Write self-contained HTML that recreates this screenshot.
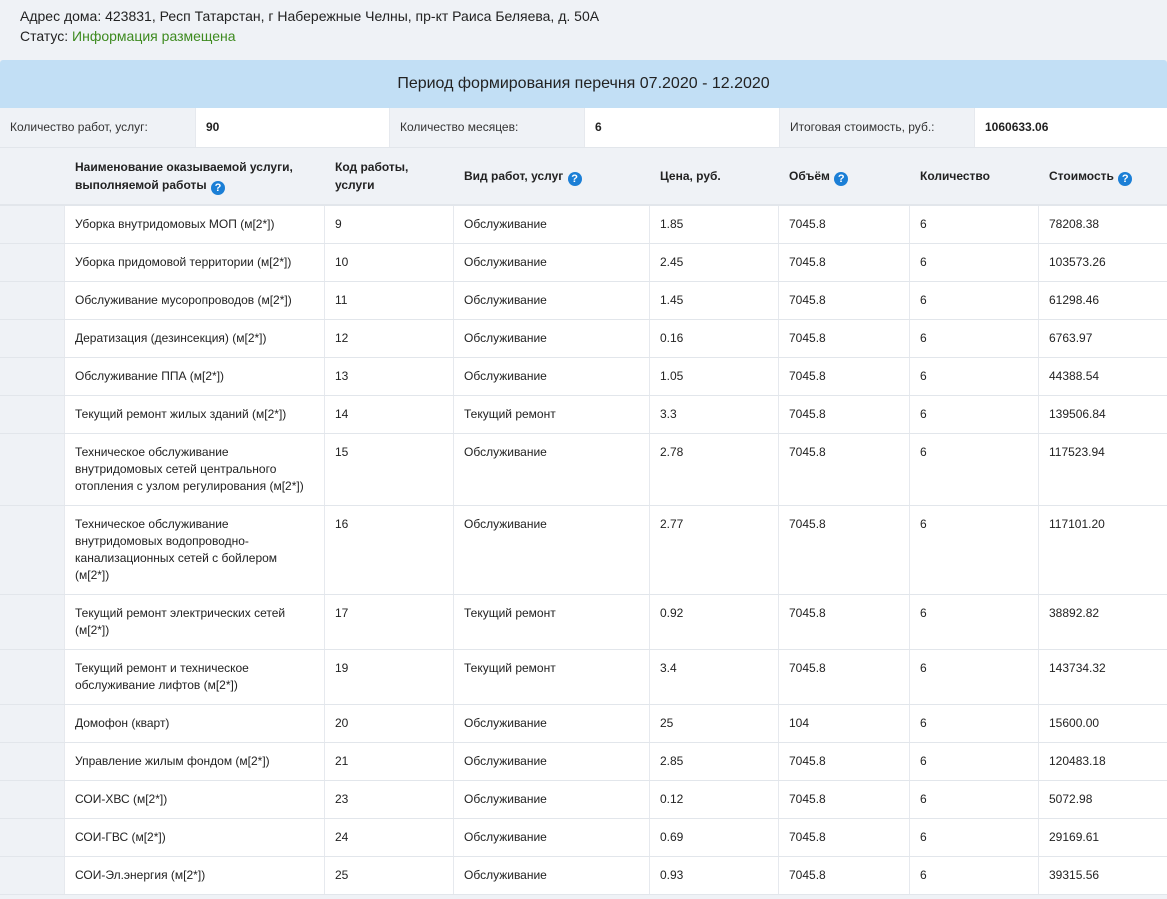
<!DOCTYPE html>
<html><head><meta charset="utf-8"><style>
*{box-sizing:border-box;margin:0;padding:0}
body{width:1167px;height:899px;overflow:hidden;background:#eff2f6;font-family:"Liberation Sans",Arial,sans-serif;color:#222}
.top{padding:6px 0 0 20px;font-size:14px;line-height:20px;color:#222}
.top .g{color:#3d8a1f}
.band{position:absolute;top:60px;left:0;width:1167px;height:48px;background:#c2dff5;text-align:center;font-size:16px;line-height:48px;color:#222;border-radius:3px 3px 0 0}
.info{position:absolute;top:108px;left:0;width:1167px;height:40px;display:flex;border-bottom:1px solid #e2e6eb}
.info div{height:39px;line-height:39px;font-size:12px;padding-left:10px;border-right:1px solid #e6e9ee}
.info .l{background:#eff2f6;color:#333}
.info .v{background:#fff;font-weight:bold;padding-left:10px}
.tbl{position:absolute;top:148px;left:0;width:1167px}
.r{display:flex;border-bottom:1px solid #e2e6eb;background:#fff}
.r>div{border-right:1px solid #e6e9ee;padding:10px 0 0 10px;font-size:12px;line-height:17px;color:#222}
.r>div:last-child{border-right:none}
.r>div:first-child{background:#eff2f6;padding:0}
.h{background:#eff2f6;border-bottom:2px solid #e2e6eb}
.h>div{border-right:none!important;font-weight:bold;display:flex;align-items:center;padding-top:0!important;line-height:18px}
.c0{width:65px}.c1{width:260px}.c2{width:129px}.c3{width:196px}.c4{width:129px}.c5{width:131px}.c6{width:129px}.c7{width:128px}
.q{display:inline-block;width:14px;height:14px;border-radius:50%;background:#1b7fd6;color:#fff;font-size:11px;line-height:14px;text-align:center;font-weight:bold;vertical-align:-2px;margin-left:1px}
</style></head><body>
<div class="top">Адрес дома: 423831, Респ Татарстан, г Набережные Челны, пр-кт Раиса Беляева, д. 50А<br>Статус: <span class="g">Информация размещена</span></div>
<div class="band">Период формирования перечня 07.2020 - 12.2020</div>
<div class="info">
<div class="l" style="width:196px">Количество работ, услуг:</div>
<div class="v" style="width:194px">90</div>
<div class="l" style="width:195px">Количество месяцев:</div>
<div class="v" style="width:195px">6</div>
<div class="l" style="width:195px">Итоговая стоимость, руб.:</div>
<div class="v" style="width:192px;border-right:none">1060633.06</div>
</div>
<div class="tbl">
<div class="r h" style="height:58px">
<div class="c0"></div>
<div class="c1" style="padding-left:10px"><span>Наименование оказываемой услуги,<br>выполняемой работы <span class="q">?</span></span></div>
<div class="c2"><span>Код работы,<br>услуги</span></div>
<div class="c3"><span>Вид работ, услуг <span class="q">?</span></span></div>
<div class="c4"><span>Цена, руб.</span></div>
<div class="c5"><span>Объём <span class="q">?</span></span></div>
<div class="c6"><span>Количество</span></div>
<div class="c7"><span>Стоимость <span class="q">?</span></span></div>
</div>
<div class="r" style="height:38px"><div class="c0"></div><div class="c1">Уборка внутридомовых МОП (м[2*])</div><div class="c2">9</div><div class="c3">Обслуживание</div><div class="c4">1.85</div><div class="c5">7045.8</div><div class="c6">6</div><div class="c7">78208.38</div></div>
<div class="r" style="height:38px"><div class="c0"></div><div class="c1">Уборка придомовой территории (м[2*])</div><div class="c2">10</div><div class="c3">Обслуживание</div><div class="c4">2.45</div><div class="c5">7045.8</div><div class="c6">6</div><div class="c7">103573.26</div></div>
<div class="r" style="height:38px"><div class="c0"></div><div class="c1">Обслуживание мусоропроводов (м[2*])</div><div class="c2">11</div><div class="c3">Обслуживание</div><div class="c4">1.45</div><div class="c5">7045.8</div><div class="c6">6</div><div class="c7">61298.46</div></div>
<div class="r" style="height:38px"><div class="c0"></div><div class="c1">Дератизация (дезинсекция) (м[2*])</div><div class="c2">12</div><div class="c3">Обслуживание</div><div class="c4">0.16</div><div class="c5">7045.8</div><div class="c6">6</div><div class="c7">6763.97</div></div>
<div class="r" style="height:38px"><div class="c0"></div><div class="c1">Обслуживание ППА (м[2*])</div><div class="c2">13</div><div class="c3">Обслуживание</div><div class="c4">1.05</div><div class="c5">7045.8</div><div class="c6">6</div><div class="c7">44388.54</div></div>
<div class="r" style="height:38px"><div class="c0"></div><div class="c1">Текущий ремонт жилых зданий (м[2*])</div><div class="c2">14</div><div class="c3">Текущий ремонт</div><div class="c4">3.3</div><div class="c5">7045.8</div><div class="c6">6</div><div class="c7">139506.84</div></div>
<div class="r" style="height:72px"><div class="c0"></div><div class="c1">Техническое обслуживание<br>внутридомовых сетей центрального<br>отопления с узлом регулирования (м[2*])</div><div class="c2">15</div><div class="c3">Обслуживание</div><div class="c4">2.78</div><div class="c5">7045.8</div><div class="c6">6</div><div class="c7">117523.94</div></div>
<div class="r" style="height:89px"><div class="c0"></div><div class="c1">Техническое обслуживание<br>внутридомовых водопроводно-<br>канализационных сетей с бойлером<br>(м[2*])</div><div class="c2">16</div><div class="c3">Обслуживание</div><div class="c4">2.77</div><div class="c5">7045.8</div><div class="c6">6</div><div class="c7">117101.20</div></div>
<div class="r" style="height:55px"><div class="c0"></div><div class="c1">Текущий ремонт электрических сетей<br>(м[2*])</div><div class="c2">17</div><div class="c3">Текущий ремонт</div><div class="c4">0.92</div><div class="c5">7045.8</div><div class="c6">6</div><div class="c7">38892.82</div></div>
<div class="r" style="height:55px"><div class="c0"></div><div class="c1">Текущий ремонт и техническое<br>обслуживание лифтов (м[2*])</div><div class="c2">19</div><div class="c3">Текущий ремонт</div><div class="c4">3.4</div><div class="c5">7045.8</div><div class="c6">6</div><div class="c7">143734.32</div></div>
<div class="r" style="height:38px"><div class="c0"></div><div class="c1">Домофон (кварт)</div><div class="c2">20</div><div class="c3">Обслуживание</div><div class="c4">25</div><div class="c5">104</div><div class="c6">6</div><div class="c7">15600.00</div></div>
<div class="r" style="height:38px"><div class="c0"></div><div class="c1">Управление жилым фондом (м[2*])</div><div class="c2">21</div><div class="c3">Обслуживание</div><div class="c4">2.85</div><div class="c5">7045.8</div><div class="c6">6</div><div class="c7">120483.18</div></div>
<div class="r" style="height:38px"><div class="c0"></div><div class="c1">СОИ-ХВС (м[2*])</div><div class="c2">23</div><div class="c3">Обслуживание</div><div class="c4">0.12</div><div class="c5">7045.8</div><div class="c6">6</div><div class="c7">5072.98</div></div>
<div class="r" style="height:38px"><div class="c0"></div><div class="c1">СОИ-ГВС (м[2*])</div><div class="c2">24</div><div class="c3">Обслуживание</div><div class="c4">0.69</div><div class="c5">7045.8</div><div class="c6">6</div><div class="c7">29169.61</div></div>
<div class="r" style="height:38px"><div class="c0"></div><div class="c1">СОИ-Эл.энергия (м[2*])</div><div class="c2">25</div><div class="c3">Обслуживание</div><div class="c4">0.93</div><div class="c5">7045.8</div><div class="c6">6</div><div class="c7">39315.56</div></div>
</div>
</body></html>
